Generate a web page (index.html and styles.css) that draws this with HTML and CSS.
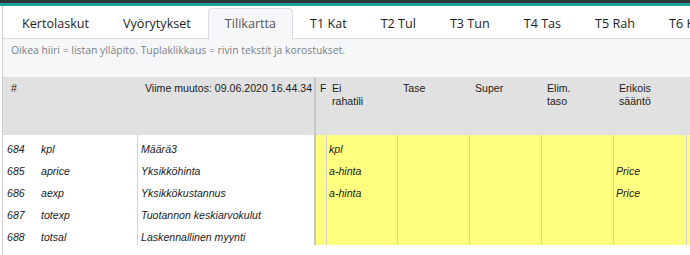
FILE: index.html
```html
<!doctype html>
<html>
<head>
<meta charset="utf-8">
<title>Tilikartta</title>
<link rel="stylesheet" href="styles.css">
</head>
<body>
<div class="topbar"></div>
<div class="app">
  <ul class="tabs">
    <li>Kertolaskut</li>
    <li>Vyörytykset</li>
    <li class="active">Tilikartta</li>
    <li>T1 Kat</li>
    <li>T2 Tul</li>
    <li>T3 Tun</li>
    <li>T4 Tas</li>
    <li>T5 Rah</li>
    <li>T6 Kus</li>
  </ul>
  <div class="hint">Oikea hiiri = listan ylläpito. Tuplaklikkaus = rivin tekstit ja korostukset.</div>
  <div class="grid">
    <div class="hd c-num">#</div>
    <div class="hd c-code"></div>
    <div class="hd c-name">Viime muutos: 09.06.2020 16.44.34</div>
    <div class="hd c-f">F</div>
    <div class="hd c-y">Ei<br>rahatili</div>
    <div class="hd c-y">Tase</div>
    <div class="hd c-y">Super</div>
    <div class="hd c-y">Elim.<br>taso</div>
    <div class="hd c-y">Erikois<br>sääntö</div>
    <div class="hd c-y"></div>

    <div class="cell c-num">684</div><div class="cell c-code">kpl</div><div class="cell c-name">Määrä3</div>
    <div class="cell yel c-f"></div><div class="cell yel c-y">kpl</div><div class="cell yel c-y"></div><div class="cell yel c-y"></div><div class="cell yel c-y"></div><div class="cell yel c-y"></div><div class="cell yel c-y"></div>

    <div class="cell c-num">685</div><div class="cell c-code">aprice</div><div class="cell c-name">Yksikköhinta</div>
    <div class="cell yel c-f"></div><div class="cell yel c-y">a-hinta</div><div class="cell yel c-y"></div><div class="cell yel c-y"></div><div class="cell yel c-y"></div><div class="cell yel c-y">Price</div><div class="cell yel c-y"></div>

    <div class="cell c-num">686</div><div class="cell c-code">aexp</div><div class="cell c-name">Yksikkökustannus</div>
    <div class="cell yel c-f"></div><div class="cell yel c-y">a-hinta</div><div class="cell yel c-y"></div><div class="cell yel c-y"></div><div class="cell yel c-y"></div><div class="cell yel c-y">Price</div><div class="cell yel c-y"></div>

    <div class="cell c-num">687</div><div class="cell c-code">totexp</div><div class="cell c-name">Tuotannon keskiarvokulut</div>
    <div class="cell yel c-f"></div><div class="cell yel c-y"></div><div class="cell yel c-y"></div><div class="cell yel c-y"></div><div class="cell yel c-y"></div><div class="cell yel c-y"></div><div class="cell yel c-y"></div>

    <div class="cell c-num">688</div><div class="cell c-code">totsal</div><div class="cell c-name">Laskennallinen myynti</div>
    <div class="cell yel c-f"></div><div class="cell yel c-y"></div><div class="cell yel c-y"></div><div class="cell yel c-y"></div><div class="cell yel c-y"></div><div class="cell yel c-y"></div><div class="cell yel c-y"></div>
  </div>
</div>
</body>
</html>
```

FILE: styles.css
```css
*{margin:0;padding:0;box-sizing:border-box;}
html,body{overflow:hidden;}
body{background:#fff;width:690px;height:255px;}

.topbar{height:6px;background:#2f3438;border-bottom:3px solid #17a190;}

.app{margin-left:2px;border-left:1px solid #cfcfcf;height:249px;overflow:hidden;}

.tabs{list-style:none;display:flex;height:33px;padding-top:2px;padding-left:2px;border-bottom:1px solid #dcdde0;font-family:"Open Sans",sans-serif;font-size:12.6px;color:#1e1e1e;white-space:nowrap;}
.tabs li{flex-shrink:0;padding:0 16px;line-height:30px;border:1px solid transparent;border-bottom:0;border-radius:4px 4px 0 0;}
.tabs li.active{background:#f6f7f9;border-color:#dcdde0;color:#555;margin-bottom:-1px;height:32px;}

.hint{background:#f6f7f9;height:39px;padding:4px 0 0 8px;font-family:"Open Sans",sans-serif;font-size:10.4px;color:#7b7f86;border-bottom:1px solid #dcdde0;}

.grid{display:grid;grid-template-columns:35px 99px 177px 12px 71px 72px 72px 72px 73px 40px;grid-template-rows:57px repeat(5,22px);font-family:"Liberation Sans",sans-serif;font-size:10.6px;color:#1c1c1c;}
.hd{background:#e1e1e1;padding:4px 0 0 7px;line-height:13px;white-space:nowrap;overflow:hidden;}
.cell{padding:6px 3px 0;line-height:16px;font-style:italic;white-space:nowrap;overflow:hidden;}
.grid .c-name{border-left:1px solid #d4d4d4;}
.grid .hd.c-name{border-left-color:#e1e1e1;}
.grid .c-f{border-left:2px solid #c6c6c6;padding-left:4px;}
.grid .c-y{border-left:1px solid #cfcfcf;}
.grid .hd.c-y{border-left-color:#e1e1e1;padding-left:5px;}
.hd.c-num{padding-left:8px;}
.cell.c-num{padding-left:4px;}
.yel{background:#ffff80;}
.cell.c-y{padding-left:2px;}
```
